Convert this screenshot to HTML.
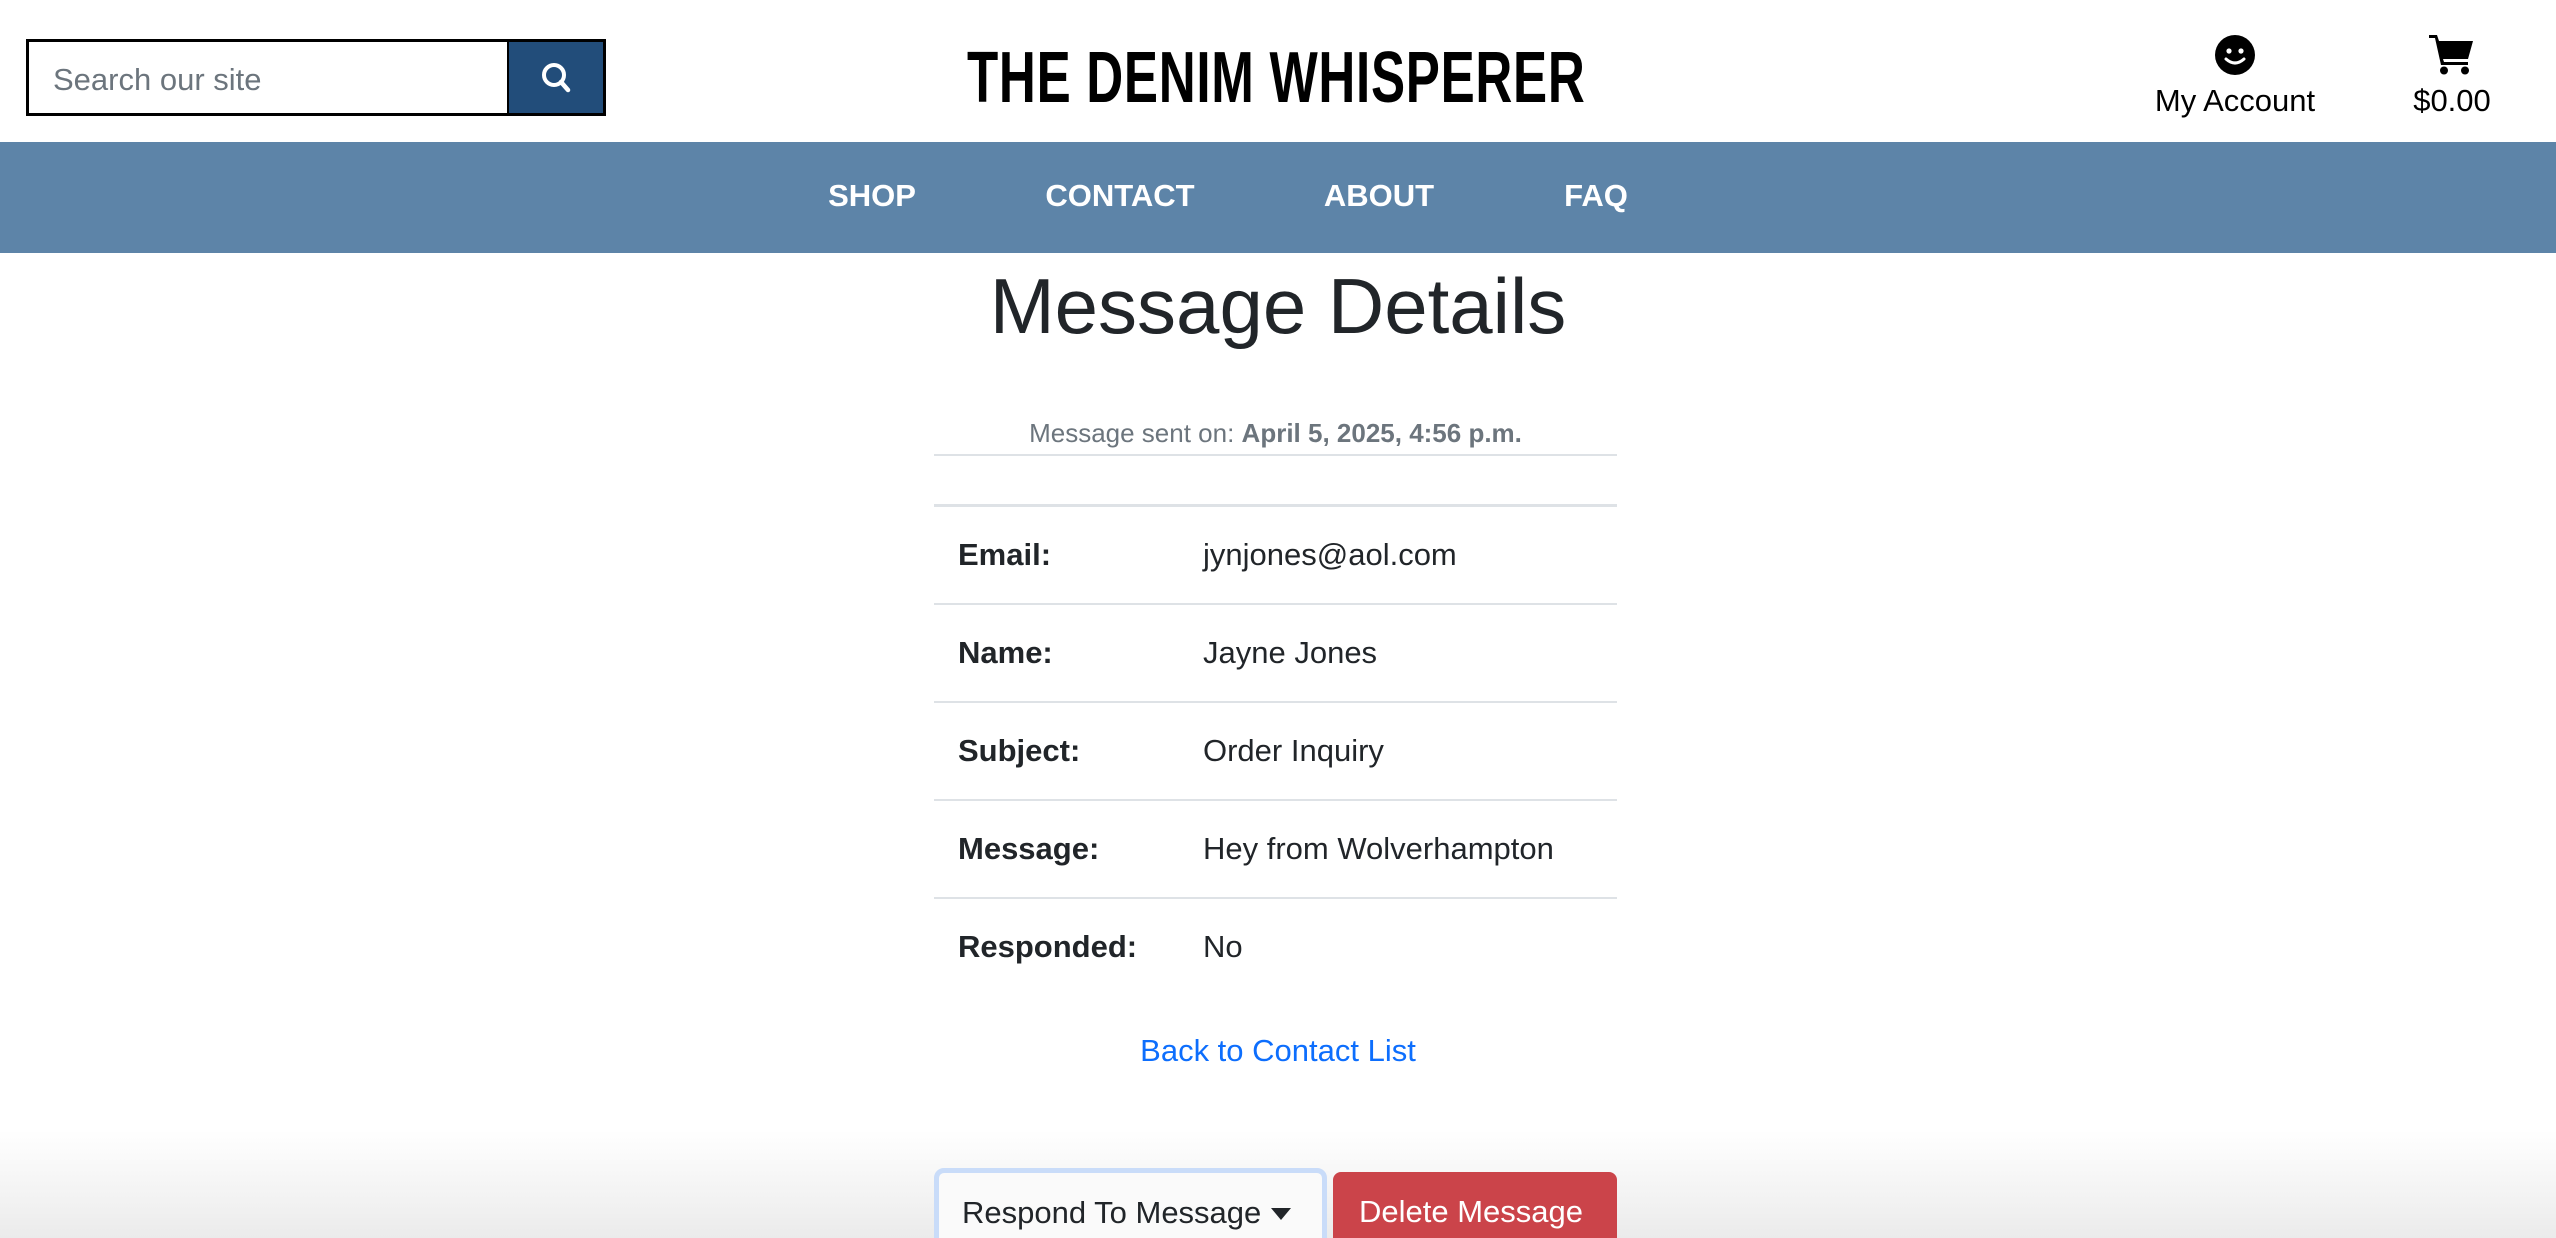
<!DOCTYPE html>
<html><head><meta charset="utf-8"><style>
*{margin:0;padding:0;box-sizing:border-box}
html,body{width:2556px;height:1238px;overflow:hidden}
body{background:#fff;font-family:"Liberation Sans",sans-serif;color:#212529;position:relative}
.abs{position:absolute}
.search{left:26px;top:39px;width:481px;height:77px;border:3px solid #000;border-right:none;font-size:31px;color:#6c757d;padding:20px 0 0 24px}
.sbtn{left:507px;top:39px;width:99px;height:77px;background:#224d7a;border:3px solid #000;border-left:2px solid #000}
.logo{left:967px;top:42px;font-weight:bold;font-size:72px;line-height:72px;color:#000;white-space:nowrap;letter-spacing:1px;transform:scaleX(0.71);transform-origin:0 0}
.acc{font-size:31px;color:#000;text-align:center}
.nav{left:0;top:142px;width:2556px;height:111px;background:#5d84a8}
.nav span{position:absolute;top:36px;color:#fff;font-weight:bold;font-size:31px;transform:translateX(-50%);white-space:nowrap}
h1{position:absolute;left:0;width:2556px;text-align:center;top:258px;font-size:78px;font-weight:normal;line-height:96px}
.sent{left:834px;width:883px;top:418px;text-align:center;font-size:26px;color:#6c757d}
.row{position:absolute;left:934px;width:683px;height:98px;border-top:2px solid #dee2e6;font-size:31px}
.row b{position:absolute;left:24px;top:30px}
.row span{position:absolute;left:269px;top:30px}
.link{left:0;width:2556px;text-align:center;top:1033px;font-size:31px;color:#0d6efd}
.shade{left:0;top:1130px;width:2556px;height:108px;background:linear-gradient(#fff,#ebebeb)}
.b1{left:934px;top:1168px;width:393px;height:80px;border:5px solid #c9dcf9;border-radius:10px;background:#fafafa;font-size:31px;padding:22px 0 0 23px;white-space:nowrap}
.b2{left:1333px;top:1172px;width:284px;height:80px;border-radius:8px;background:#cb444a;color:#fff;font-size:31px;padding:22px 0 0 26px}
</style></head><body>
<div class="abs search">Search our site</div>
<div class="abs sbtn"><svg width="99" height="77" viewBox="0 0 99 77" style="position:absolute;left:-2px;top:-3px"><circle cx="47" cy="36" r="10" fill="none" stroke="#fff" stroke-width="4"/><line x1="54" y1="43" x2="61" y2="51" stroke="#fff" stroke-width="4.5" stroke-linecap="round"/></svg></div>
<div class="abs logo">THE DENIM WHISPERER</div>
<svg class="abs" style="left:2215px;top:35px" width="40" height="40" viewBox="0 0 40 40"><circle cx="20" cy="20" r="20" fill="#000"/><circle cx="14" cy="16" r="2.6" fill="#fff"/><circle cx="26" cy="16" r="2.6" fill="#fff"/><path d="M11 24 Q20 32 29 24" stroke="#fff" stroke-width="3" fill="none" stroke-linecap="round"/></svg>
<div class="abs acc" style="left:2135px;width:200px;top:83px">My Account</div>
<svg class="abs" style="left:2429px;top:33px" width="46" height="42" viewBox="0 0 46 42"><path d="M0 2 H8 L10 8 H44 L39 26 H14 L15 29 H39 V32 H12 L6 5 H0 Z" fill="#000"/><circle cx="15" cy="37.5" r="4" fill="#000"/><circle cx="36" cy="37.5" r="4" fill="#000"/></svg>
<div class="abs acc" style="left:2352px;width:200px;top:83px">$0.00</div>
<div class="abs nav"><span style="left:872px">SHOP</span><span style="left:1120px">CONTACT</span><span style="left:1379px">ABOUT</span><span style="left:1596px">FAQ</span></div>
<h1>Message Details</h1>
<div class="abs sent">Message sent on: <b>April 5, 2025, 4:56 p.m.</b></div>
<div class="abs" style="left:934px;width:683px;top:454px;border-top:2px solid #dee2e6"></div>
<div class="row" style="top:504px;border-top:3px solid #dee2e6"><b>Email:</b><span>jynjones@aol.com</span></div>
<div class="row" style="top:603px"><b>Name:</b><span>Jayne Jones</span></div>
<div class="row" style="top:701px"><b>Subject:</b><span>Order Inquiry</span></div>
<div class="row" style="top:799px"><b>Message:</b><span>Hey from Wolverhampton</span></div>
<div class="row" style="top:897px"><b>Responded:</b><span>No</span></div>
<div class="abs link">Back to Contact List</div>
<div class="abs shade"></div>
<div class="abs b1">Respond To Message <svg width="22" height="14" viewBox="0 0 22 14" style="vertical-align:2px"><path d="M1 1 H21 L11 13 Z" fill="#212529"/></svg></div>
<div class="abs b2">Delete Message</div>
</body></html>
